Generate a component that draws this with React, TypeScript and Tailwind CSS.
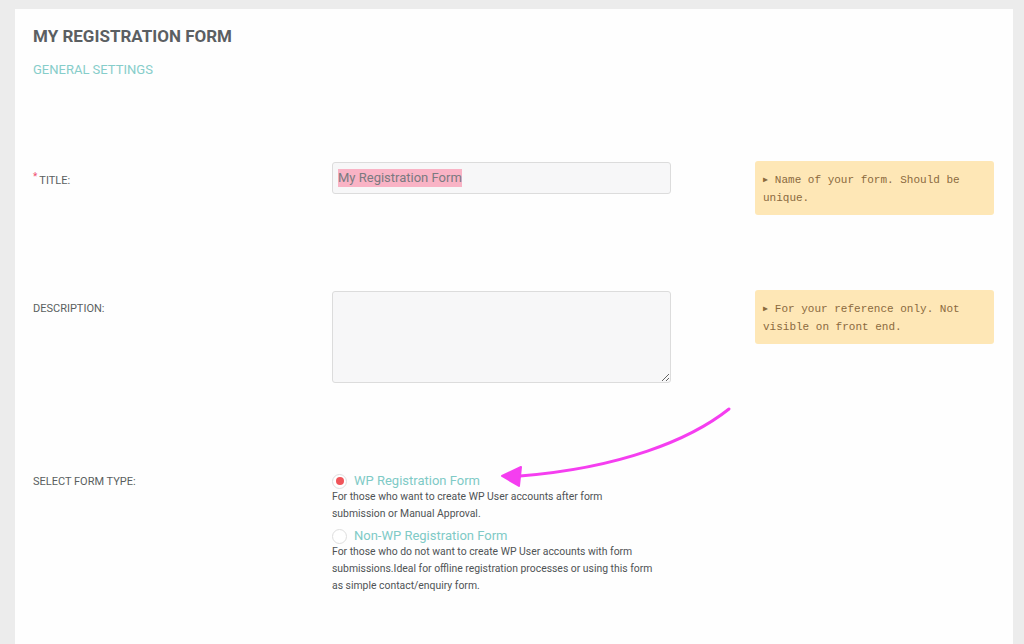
import React from 'react';

const hintCls =
  "w-[239px] rounded-[3px] bg-[#fee7b6] px-[8px] pt-[10px] pb-[8px] text-[11px] leading-[18px] text-[#8b6a3e] font-['Liberation_Mono',monospace]";

function Caret() {
  return <span className="mr-[7px] inline-block align-[1px] text-[8px] leading-none">▶</span>;
}

export default function App() {
  return (
    <div className="relative h-[644px] w-[1024px] overflow-hidden bg-[#ececec] pl-[15px] pr-[11px] pt-[9px] font-['Roboto',sans-serif]">
      <div className="h-full bg-[#fefefe] pl-[18px]">
        {/* Header */}
        <h1 className="pt-[17px] text-[17px] font-bold leading-[20px] text-[#5b5f62]">
          MY REGISTRATION FORM
        </h1>
        <div className="mt-[17px] text-[13px] leading-[14px] text-[#86cdca]">GENERAL SETTINGS</div>

        {/* Title row */}
        <div className="mt-[85px] flex items-start">
          <div className="w-[299px] pt-[12px] text-[11px] leading-[14px] text-[#5a5e60]">
            <span className="relative -top-[4px] mr-[2px] text-[10px] text-[#f0506e]">*</span>
            TITLE:
          </div>
          <div className="flex h-[32px] w-[339px] items-center rounded-[3px] border border-[#dcdcdc] bg-[#f7f7f8] px-[5px]">
            <span className="bg-[#f9b3c5] text-[13px] leading-[18px] text-[#7a7a80]">My Registration Form</span>
          </div>
          <div className="ml-[84px] -mt-[1px]">
            <div className={hintCls}>
              <Caret />Name of your form. Should be unique.
            </div>
          </div>
        </div>

        {/* Description row */}
        <div className="mt-[76px] flex items-start">
          <div className="w-[299px] pt-[11px] text-[11px] leading-[14px] text-[#5a5e60]">DESCRIPTION:</div>
          <textarea className="h-[92px] w-[339px] resize rounded-[3px] border border-[#dcdcdc] bg-[#f7f7f8] outline-none" />
          <div className="ml-[84px] -mt-[1px]">
            <div className={hintCls}>
              <Caret />For your reference only. Not visible on front end.
            </div>
          </div>
        </div>

        {/* Form type row */}
        <div className="mt-[90px] flex items-start">
          <div className="w-[299px] pt-[2px] text-[11px] leading-[14px] text-[#5a5e60]">SELECT FORM TYPE:</div>
          <div className="w-[340px]">
            <div className="flex items-center gap-[7px]">
              <span className="flex h-[15px] w-[15px] items-center justify-center rounded-full border border-[#dedede] bg-white">
                <span className="h-[8px] w-[8px] rounded-full bg-[#f0555a]" />
              </span>
              <span className="text-[13px] leading-[16px] text-[#7fcac6]">WP Registration Form</span>
            </div>
            <p className="-mt-[1px] whitespace-nowrap text-[10.4px] leading-[17px] text-[#4f5355]">
              For those who want to create WP User accounts after form
              <br />
              submission or Manual Approval.
            </p>
            <div className="mt-[6px] flex items-center gap-[7px]">
              <span className="h-[15px] w-[15px] rounded-full border border-[#dedede] bg-white" />
              <span className="text-[13px] leading-[16px] text-[#7fcac6]">Non-WP Registration Form</span>
            </div>
            <p className="-mt-[1px] whitespace-nowrap text-[10.4px] leading-[17px] text-[#4f5355]">
              For those who do not want to create WP User accounts with form
              <br />
              submissions.Ideal for offline registration processes or using this form
              <br />
              as simple contact/enquiry form.
            </p>
          </div>
        </div>
      </div>

      {/* Annotation arrow */}
      <svg className="absolute left-0 top-0" width="1024" height="644" viewBox="0 0 1024 644">
        <path d="M729 409 C 690 440, 620 468, 520 476" fill="none" stroke="#f53ef0" strokeWidth="3" strokeLinecap="round" />
        <path d="M502 476 L 521 467 L 519 486 Z" fill="#f53ef0" stroke="#f53ef0" strokeWidth="2" strokeLinejoin="round" />
      </svg>
    </div>
  );
}
